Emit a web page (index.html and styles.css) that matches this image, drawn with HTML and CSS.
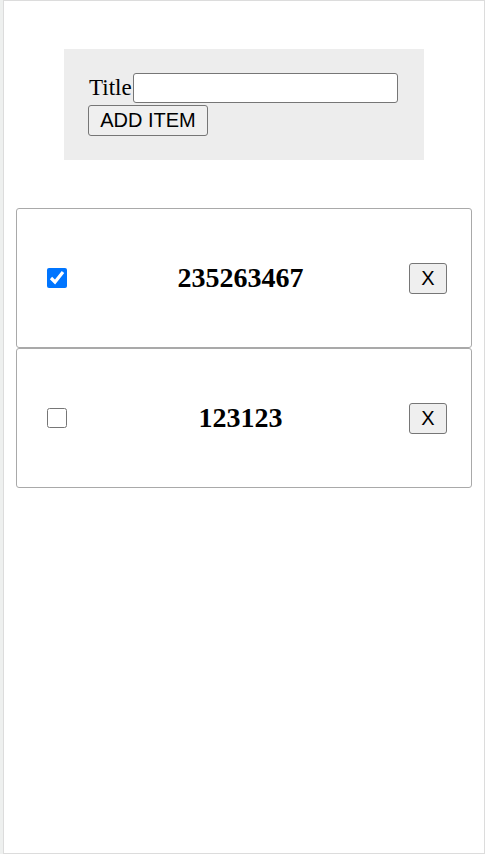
FILE: index.html
```html
<!DOCTYPE html>
<html>
<head>
<meta charset="utf-8">
<link rel="stylesheet" href="styles.css">
</head>
<body>
<div class="frame">
  <form class="add-form">
    <div class="row">
      <label class="title-label" for="title">Title</label>
      <input id="title" class="title-input" type="text">
    </div>
    <div class="row row-btn">
      <button type="button" class="btn add-btn">ADD ITEM</button>
    </div>
  </form>
  <div class="list">
    <div class="card">
      <input type="checkbox" class="check" checked>
      <h2 class="item-title">235263467</h2>
      <button type="button" class="btn del-btn">X</button>
    </div>
    <div class="card">
      <input type="checkbox" class="check">
      <h2 class="item-title">123123</h2>
      <button type="button" class="btn del-btn">X</button>
    </div>
  </div>
</div>
</body>
</html>
```
FILE: styles.css
```css
html, body {
  margin: 0;
  padding: 0;
  background: #ffffff;
}
body {
  font-family: "Liberation Serif", "Times New Roman", serif;
  color: #000;
}
.frame {
  box-sizing: border-box;
  margin-left: 3px;
  width: 482px;
  height: 854px;
  border: 1px solid #dcdcdc;
  background: #fff;
  box-shadow: -3px 0 0 #eef0ef;
}
.add-form {
  box-sizing: border-box;
  width: 360px;
  height: 111px;
  margin: 48px auto 0;
  padding: 24px 24px 0 24px;
  background: #ededed;
}
.row {
  display: flex;
  align-items: center;
}
.row-btn {
  margin-top: 2px;
}
.title-label {
  font-size: 23px;
  padding-left: 1px;
}
.title-input {
  box-sizing: border-box;
  width: 265px;
  height: 30px;
  margin: 0 0 0 1px;
  border: 1px solid #767676;
  border-radius: 3px;
  background: #fff;
}
.btn {
  box-sizing: border-box;
  font-family: "Liberation Sans", Arial, sans-serif;
  font-size: 20px;
  color: #000;
  background: #efefef;
  border: 1px solid #767676;
  border-radius: 3px;
  margin: 0;
  padding: 0;
  height: 31px;
}
.add-btn {
  width: 120px;
}
.list {
  margin: 48px 12px 0;
}
.card {
  box-sizing: border-box;
  height: 140px;
  display: flex;
  align-items: center;
  padding: 0 24px 0 30px;
  border: 1px solid #a9a9a9;
  border-radius: 3px;
}
.check {
  width: 20px;
  height: 20px;
  margin: 0;
}
.item-title {
  flex: 1;
  margin: 0 0 0 5px;
  text-align: center;
  font-size: 28px;
  font-weight: bold;
}
.del-btn {
  width: 38px;
}
```
